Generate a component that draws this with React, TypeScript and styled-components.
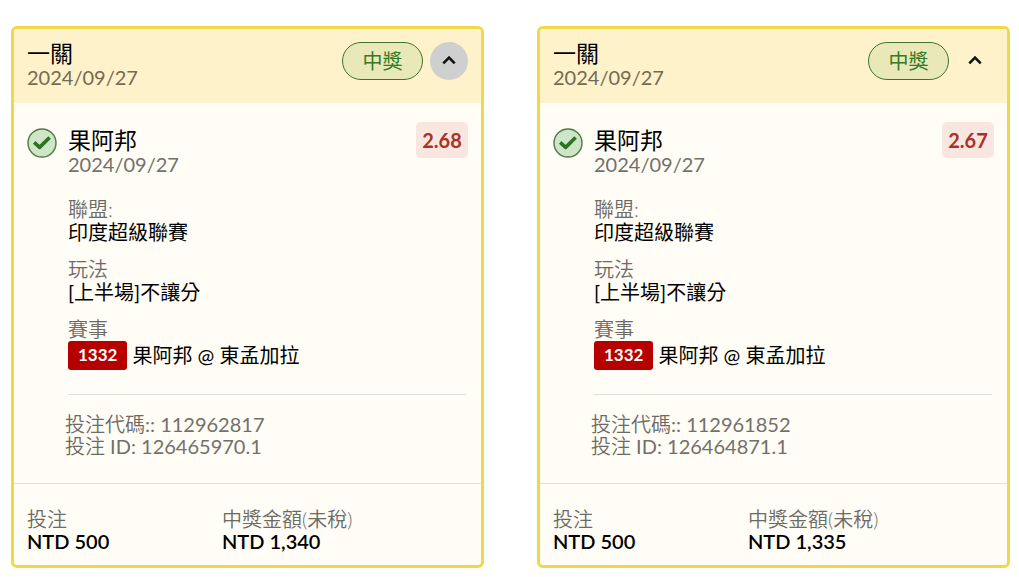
import React, { useState } from "react";
import styled, { createGlobalStyle } from "styled-components";

const GlobalStyle = createGlobalStyle`
  *, *::before, *::after { box-sizing: border-box; }
  body {
    margin: 0;
    background: #fff;
    color: #000;
    font-family: Lato, "Noto Sans CJK TC", sans-serif;
    font-size: 20px;
    line-height: 24px;
  }
  h2, h3, p, dl, dd { margin: 0; font-weight: 400; }
`;

const Board = styled.main`
  display: grid;
  grid-template-columns: repeat(2, minmax(0, 1fr));
  column-gap: 53px;
  align-items: start;
  padding: 26px 9px 8px 11px;
`;

const Card = styled.article`
  overflow: hidden;
  border: 3px solid #efd84a;
  border-radius: 6px;
  background: #fffdf5;
`;

const CardHeader = styled.header`
  display: flex;
  align-items: flex-start;
  justify-content: space-between;
  padding: 12px 13px 14px;
  background: #fef2cb;
`;

const Title = styled.h2`
  font-size: 23px;
  font-weight: 400;
  line-height: 24px;
`;

const TeamName = styled(Title).attrs({ as: "h3" })``;

const DateText = styled.p<{ $warm?: boolean }>`
  color: ${(p) => (p.$warm ? "#746a52" : "#72706c")};
`;

const Actions = styled.div`
  display: flex;
  gap: 7px;
  padding-top: 1px;
`;

const StatusPill = styled.span`
  display: flex;
  align-items: center;
  justify-content: center;
  width: 81px;
  height: 38px;
  border: 1px solid #3f722b;
  border-radius: 19px;
  background: #e9e8b8;
  color: #357a25;
`;

const ToggleButton = styled.button<{ $active: boolean }>`
  display: flex;
  align-items: center;
  justify-content: center;
  width: 38px;
  height: 38px;
  padding: 0;
  border: 0;
  border-radius: 50%;
  background: ${(p) => (p.$active ? "#cfcfcf" : "transparent")};
  color: #111;
  cursor: pointer;
`;

const Selection = styled.section`
  display: grid;
  grid-template-columns: 30px minmax(0, 1fr) auto;
  column-gap: 11px;
  padding: 19px 13px 26px;
`;

const StatusIcon = styled.svg`
  margin-top: 6px;
`;

const TeamBlock = styled.div`
  padding: 6px 0 1px;
`;

const Odds = styled.strong`
  display: flex;
  align-items: center;
  justify-content: center;
  width: 52px;
  height: 36px;
  border-radius: 5px;
  background: #f9e6e0;
  color: #a83228;
  font-weight: 700;
`;

const Details = styled.div`
  grid-column: 2 / -1;
  padding-top: 21px;
`;

const FieldList = styled.dl`
  display: flex;
  flex-direction: column;
  gap: 14px;
  margin-right: 2px;
  padding-bottom: 24px;
  border-bottom: 1px solid #e2dfda;
`;

const Label = styled.dt`
  color: #6c6a66;
  font-weight: 350;
  line-height: 22px;
`;

const Value = styled.dd`
  font-weight: 400;
`;

const MatchValue = styled(Value)`
  display: flex;
  align-items: center;
  gap: 5px;
  height: 30px;
`;

const MatchNumber = styled.span`
  padding: 2px 10px 3px;
  border-radius: 3px;
  background: #b60000;
  color: #fff;
  font-size: 17px;
  font-weight: 700;
`;

const References = styled.div`
  margin: 18px 0 0 -3px;
  color: #72706c;
  line-height: 22px;
`;

const Thin = styled.span`
  color: #6c6a66;
  font-weight: 350;
`;

const CardFooter = styled.footer`
  padding: 24px 13px 13px;
  border-top: 1px solid #e2dfda;
`;

const Totals = styled.dl`
  display: grid;
  grid-template-columns: 195px minmax(0, 1fr);
`;

const Amount = styled.dd`
  font-weight: 600;
  line-height: 22px;
`;

interface Bet {
  odds: string;
  code: string;
  id: string;
  payout: string;
  active: boolean;
}

const bets: Bet[] = [
  { odds: "2.68", code: "112962817", id: "126465970.1", payout: "NTD 1,340", active: true },
  { odds: "2.67", code: "112961852", id: "126464871.1", payout: "NTD 1,335", active: false },
];

function BetCard({ bet }: { bet: Bet }) {
  const [open, setOpen] = useState(true);
  return (
    <Card>
      <CardHeader>
        <div>
          <Title>一關</Title>
          <DateText $warm>2024/09/27</DateText>
        </div>
        <Actions>
          <StatusPill>中獎</StatusPill>
          <ToggleButton
            type="button"
            $active={bet.active}
            aria-label="詳情"
            aria-expanded={open}
            onClick={() => setOpen(!open)}
          >
            <svg width="16" height="12" viewBox="0 0 16 12" fill="none" aria-hidden="true">
              <path
                d={open ? "M2.3 8.4 8 2.6l5.7 5.8" : "M2.3 2.6 8 8.4l5.7-5.8"}
                stroke="currentColor"
                strokeWidth="2.6"
              />
            </svg>
          </ToggleButton>
        </Actions>
      </CardHeader>
      {open && (
        <Selection>
          <StatusIcon width="30" height="30" viewBox="0 0 30 30" fill="none" aria-hidden="true">
            <circle cx="15" cy="15" r="14" fill="#cfe5c8" stroke="#4e7a45" strokeWidth="1.4" />
            <path
              d="m7.2 14.4 5.400 5 10-9.900"
              stroke="#2c7420"
              strokeWidth="3.6"
              strokeLinejoin="round"
            />
          </StatusIcon>
          <TeamBlock>
            <TeamName>果阿邦</TeamName>
            <DateText>2024/09/27</DateText>
          </TeamBlock>
          <Odds>{bet.odds}</Odds>
          <Details>
            <FieldList>
              <div>
                <Label>聯盟:</Label>
                <Value>印度超級聯賽</Value>
              </div>
              <div>
                <Label>玩法</Label>
                <Value>[上半場]不讓分</Value>
              </div>
              <div>
                <Label>賽事</Label>
                <MatchValue>
                  <MatchNumber>1332</MatchNumber>
                  <span>果阿邦 @ 東孟加拉</span>
                </MatchValue>
              </div>
            </FieldList>
            <References>
              <p><Thin>投注代碼</Thin>:: {bet.code}</p>
              <p><Thin>投注</Thin> ID: {bet.id}</p>
            </References>
          </Details>
        </Selection>
      )}
      <CardFooter>
        <Totals>
          <div>
            <Label>投注</Label>
            <Amount>NTD 500</Amount>
          </div>
          <div>
            <Label>中獎金額(未稅)</Label>
            <Amount>{bet.payout}</Amount>
          </div>
        </Totals>
      </CardFooter>
    </Card>
  );
}

export default function App() {
  return (
    <>
      <GlobalStyle />
      <Board>
        {bets.map((bet) => (
          <BetCard key={bet.id} bet={bet} />
        ))}
      </Board>
    </>
  );
}
